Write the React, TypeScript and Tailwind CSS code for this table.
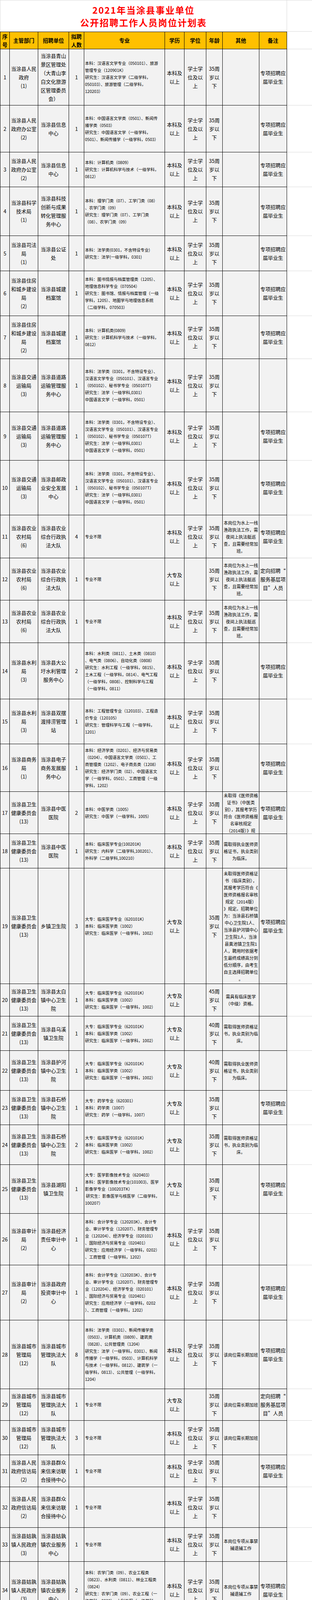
const F = "font-['Noto_Sans_CJK_SC','Noto_Sans',sans-serif]";

// dept, unit, count, major, edu, degree, age, other, note, row height
type Row = [string, string, string, string, string, string, string, string, string, number];

const BK = "本科及|以上";
const DZ = "大专及|以上";
const XS = "学士学|位及以|上";
const A35 = "35周|岁以|下";
const ZX = "专项招聘应|届毕业生";
const DX = "定向招聘“|服务基层项|目”人员";
const BX = "专业不限";
const YZ = "本岗位为水上一线|渔政执法工作，需|夜间上执法艇巡|查，且需要经常加|班。";
const JB = "本岗位专项从事禁|捕退捕工作";
const JB2 = "本岗位专项从事禁|捕退捕工作，需夜|间值班且经常加班";
const CG = "该岗位需长期加班";
const LC = "大专：临床医学专业（620101K）|本科：临床医学类（1002）|研究生：临床医学（一级学科，1002）";
const JT =
  "本科：法学类（0301，不含特设专业）、|汉语言文学专业（050101）、汉语言专业|（050102）、秘书学专业（050107T）|研究生：法学（一级学科,0301）|中国语言文学（一级学科，0501）";
const SJ =
  "本科：会计学专业（120203K）、会计专|业、审计学专业（120207）、财务管理专|业（120204）、经济学专业（020101）|、国际经济与贸易专业（020401）";
const LX = "本科：理学门类（07）、工学门类（08）|、农学门类（09）|研究生：理学门类（07）、工学门类|（08）、农学门类（09）";

const bgs = "当涂县人民|政府办公室|(2)";
const zf = "当涂县住房|和城乡建设|局|(2)";
const jt = "当涂县交通|运输局|(3)";
const ny = "当涂县农业|农村局|(6)";
const sl = "当涂县水利|局|(3)";
const ws = "当涂县卫生|健康委员会|(13)";
const sj = "当涂县审计|局|(2)";
const cg = "当涂县城市|管理局|(12)";
const xf = "当涂县人民|政府信访局|(2)";
const gs = "当涂县姑孰|镇人民政府|(3)";
const tb = "当涂县太白|镇人民政府|(3)";
const hc = "当涂县黄池|镇人民政府|(3)";
const sq = "当涂县石桥|镇人民政府|(3)";
const tn = "当涂县塘南|镇人民政府|(3)";
const dl = "当涂县大陇|镇人民政府|(3)";
const hy = "当涂县湖阳|镇人民政府|(4)";
const jx = "当涂县江心|乡人民政府|(3)";

const rows: Row[] = [
  ["当涂县人民|政府|(1)", "当涂县青山|景区管理处|（大青山李|白文化旅游|区管理委员|会）", "1", "本科：汉语言文学专业（050101）、旅游|管理专业（120901K）|研究生：汉语言文字学（二级学科，|050103）、旅游管理（二级学科，|120203）", BK, XS, A35, "", ZX, 144],
  [bgs, "当涂县信息|中心", "1", "本科：中国语言文学类（0501）、新闻传|播学类（0503）|研究生：中国语言文学（一级学科，|0501）、新闻传播学（一级学科，0503）", BK, XS, A35, "", ZX, 120],
  [bgs, "当涂县信息|中心", "1", "本科：计算机类（0809）|研究生：计算机科学与技术（一级学科，|0812）", BK, XS, A35, "", ZX, 89],
  ["当涂县科学|技术局|(1)", "当涂县科技|创新与成果|转化管理服|务中心", "1", LX, BK, XS, A35, "", ZX, 125],
  ["当涂县司法|局|(1)", "当涂县公证|处", "1", "本科：法学类(0301，不含特设专业)|研究生：法学(一级学科，0301)", BK, XS, A35, "", ZX, 90],
  [zf, "当涂县城建|档案馆", "1", "本科：图书情报与档案管理类（1205）、|地理信息科学专业（070504）|研究生：图书馆、情报与档案管理（一级|学科，1205）、地图学与地理信息系统|（二级学科，070503）", BK, XS, A35, "", ZX, 115],
  [zf, "当涂县城建|档案馆", "1", "本科：计算机类(0809)|研究生：计算机科学与技术（一级学科，|0812）", BK, XS, A35, "", ZX, 110],
  [jt, "当涂县道路|运输管理服|务中心", "1", JT, BK, XS, A35, "", "", 136],
  [jt, "当涂县道路|运输管理服|务中心", "1", JT, BK, XS, A35, "", ZX, 124],
  [jt, "当涂县邮政|业安全发展|中心", "1", JT, BK, XS, A35, "", ZX, 140],
  [ny, "当涂县农业|综合行政执|法大队", "4", BX, BK, XS, A35, YZ, ZX, 110],
  [ny, "当涂县农业|综合行政执|法大队", "1", BX, DZ, "", A35, YZ, DX, 108],
  [ny, "当涂县农业|综合行政执|法大队", "1", BX, BK, XS, A35, YZ, "", 109],
  [sl, "当涂县大公|圩水利管理|服务中心", "2", "本科：水利类（0811）、土木类（0810）|、电气类（0806）、自动化类（0808）|研究生：水利工程（一级学科，0815）、|土木工程（一级学科，0814）、电气工程|（一级学科，0808）、控制科学与工程|（一级学科，0811）", BK, XS, A35, "", ZX, 144],
  [sl, "当涂县双摆|渡排涝管理|站", "1", "本科：工程管理专业（120103）、工程造|价专业（120105）|研究生：管理科学与工程（一级学科，|1201）", BK, XS, A35, "", "", 115],
  ["当涂县商务|局|(1)", "当涂县电子|商务发展服|务中心", "1", "本科：经济学类（0201）、经济与贸易类|（0204）、中国语言文学类（0501）、工|商管理类（1202）、电子商务类（1208）|研究生：经济学门类（02）、中国语言文|学（一级学科，0501）、工商管理（一级|学科，1202）", BK, XS, A35, "", ZX, 122],
  [ws, "当涂县中医|医院", "2", "本科：中医学类（1005）|研究生：中医学（一级学科，1005）", BK, XS, A35, "未取得《医师资格|证书》（中医类|别），其报考学历|符合《医师资格报|名审核规定|（2014版）》规", ZX, 108],
  [ws, "当涂县中医|医院", "1", "本科：临床医学专业(100201K)|研究生：内科学（二级学科,100201）、|外科学（二级学科,100210）", BK, XS, A35, "需取得执业医师资|格证书，执业类别|为临床。", "", 88],
  [ws, "乡镇卫生院", "3", LC, DZ, "", A35, "未取得医师资格证|书（临床类别），|其报考学历符合《|医师资格报名审核|规定（2014版）|》规定。招聘单位|为：当涂县石桥镇|中心卫生院1人、|当涂县护河镇中心|卫生院1人，当涂|县黄池镇卫生院1|人，聘用时依据考|生最终成绩高分到|低分顺序，由考生|自主选择招聘单位|。", ZX, 296],
  [ws, "当涂县太白|镇中心卫生|院", "1", LC, DZ, "", "45周|岁以|下", "需具有临床医学|（中级）资格。", "", 83],
  [ws, "当涂县乌溪|镇卫生院", "1", LC, DZ, "", "40周|岁以|下", "需取得医师资格证|书，执业类别为临|床。", "", 88],
  [ws, "当涂县护河|镇中心卫生|院", "1", LC, DZ, "", "40周|岁以|下", "需取得执业医师资|格证书，执业类别|为临床。", "", 102],
  [ws, "当涂县石桥|镇中心卫生|院", "1", "大专：药学专业（620301）|本科：药学类（1007）|研究生：药学（一级学科，1007）", DZ, "", A35, "", ZX, 88],
  [ws, "当涂县石桥|镇中心卫生|院", "2", LC, DZ, "", A35, "需取得医师资格证|书，执业类别为临|床。", "", 102],
  [ws, "当涂县湖阳|镇卫生院", "1", "大专：医学影像技术专业（620403）|本科：医学影像技术专业(101003)、医学|影像学专业（100203TK）| 研究生：影像医学与核医学（二级学科，|100207）", DZ, "", A35, "", ZX, 125],
  [sj, "当涂县经济|责任审计中|心", "1", SJ + "|研究生：应用经济学（一级学科，0202）|、工商管理（一级学科，1202）", BK, XS, A35, "", "", 132],
  [sj, "当涂县政府|投资审计中|心", "1", SJ + "|研究生：应用经济学（一级学科，0202|）、工商管理（一级学科，1202）", BK, XS, A35, "", ZX, 141],
  [cg, "当涂县城市|管理执法大|队", "8", "本科：法学类（0301）、新闻传播学类|（0503）、计算机类（0809）、建筑类|（0828）、公共管理类（1204）|研究生：法学（一级学科，0301）、新闻|传播学（一级学科，0503）、计算机科学|与技术（一级学科，0812）、建筑学（一|级学科，0813）、公共管理（一级学科，|1204）", BK, XS, A35, CG, ZX, 176],
  [cg, "当涂县城市|管理执法大|队", "1", BX, DZ, "", A35, CG, DX, 81],
  [cg, "当涂县城市|管理执法大|队", "3", BX, BK, XS, A35, CG, "", 88],
  [xf, "当涂县群众|来信来访联|合接待中心", "1", BX, BK, XS, A35, "", ZX, 82],
  [xf, "当涂县群众|来信来访联|合接待中心", "1", BX, BK, XS, A35, "", "", 104],
  [gs, "当涂县姑孰|镇农业服务|中心", "1", BX, BK, XS, A35, JB, "", 87],
  [gs, "当涂县姑孰|镇农业服务|中心", "2", "本科：农学门类（09）、农业工程类|（0823）、水利类（0811）、林业工程类|（0824）|研究生：农学门类（09）、农业工程（一|级学科，0828）、水利工程（一级学科，|0815）、林业工程（一级学科，0829）", BK, XS, A35, JB, ZX, 146],
  [tb, "当涂县太白|镇农业服务|中心", "1", "本科：法学门类(03)|研究生：法学门类(03)", BK, XS, A35, JB2, "", 78],
  [tb, "当涂县太白|镇农业服务|中心", "2", "本科：工学门类(08)、农学门类(09)|研究生：工学门类(08)、农学门类(09)", BK, XS, A35, JB2, ZX, 104],
  [hc, "当涂县黄池|镇社会事务|服务中心", "1", "本科：公共管理类（1204）|研究生：公共管理（一级学科，1204）", BK, XS, A35, "", "", 91],
  [hc, "当涂县黄池|镇农业服务|中心", "1", "本科：文学门类（05）、管理学门类|（12）、经济学门类（02）|研究生：文学门类(05)、管理学门类|（12）、经济学门类（02）", BK, XS, A35, "", ZX, 122],
  [hc, "当涂县黄池|镇农业服务|中心", "1", LX, BK, XS, A35, "", ZX, 117],
  [sq, "当涂县石桥|镇农业服务|中心", "2", BX, BK, XS, A35, "", ZX, 90],
  [sq, "当涂县石桥|镇社会事务|服务中心", "1", BX, BK, XS, A35, "", "", 85],
  ["当涂县乌溪|镇人民政府|(2)", "当涂县乌溪|镇农业服务|中心", "2", "本科：农学门类（09）、水利类（0811）|、农业工程类（0823）|研究生：农学门类（09）、水利工程（一|级学科、0815）、农业工程（一级学科、|0828）", BK, XS, A35, "", ZX, 139],
  [tn, "当涂县塘南|镇农业服务|中心", "2", "本科：经济学门类（02）、会计学专业|（120203K）、会计专业|研究生：经济学门类（02）、会计学（二|级学科，120201）、会计专业硕士|（1253）", BK, XS, A35, "", ZX, 147],
  [tn, "当涂县塘南|镇社会事务|服务中心", "1", "本科：法学门类（03）|研究生：法学门类（03）", BK, XS, A35, "", "", 89],
  [dl, "当涂县大陇|镇农业服务|中心", "1", "本科：会计学专业（120203K）、会计专|业、财务管理专业（120204）、审计学专|业（120207）、农林经济管理专业|（120301）|研究生：会计学（二级学科，120201）|、企业管理（二级学科，120202）、农林|经济管理（一级学科，1203）", BK, XS, A35, "", ZX, 199],
  [dl, "当涂县大陇|镇农业服务|中心", "1", "本科：中国语言文学类（0501）|研究生：中国语言文学（一级学科，|0501）", BK, XS, A35, "", ZX, 90],
  [dl, "当涂县大陇|镇经济发展|服务中心", "1", "本科：土木类（0810）、水利类（0811）|、建筑类（0828）、农业工程类（0823）|、林业工程类（0824）、机械设计制造及|其自动化专业（080202）|研究生：土木工程（一级学科，0814）、|水利工程（一级学科，0815）、建筑学|（一级学科，0813）、农业工程（一级学|科，0828）、林业工程（一级学科，|0829）、机械工程（一级学科，0802）", BK, XS, A35, "", "", 269],
  [hy, "当涂县湖阳|镇农业服务|中心", "2", BX, BK, XS, A35, JB, ZX, 96],
  [hy, "当涂县湖阳|镇农业服务|中心", "1", "本科：管理学门类（12）|研究生：管理学门类（12）", BK, XS, A35, JB, ZX, 109],
  [hy, "当涂县湖阳|镇社会事务|服务中心", "1", BX, BK, XS, A35, "", "", 86],
  [jx, "当涂县江心|乡农业服务|中心", "2", BX, BK, XS, A35, JB, ZX, 98],
  [jx, "当涂县江心|乡农业服务|中心", "1", BX, BK, XS, A35, JB, "", 72],
  ["当涂县护河|镇人民政府|(1)", "当涂县护河|镇社会事务|服务中心", "1", BX, BK, XS, A35, "", ZX, 87],
];

function Lines({ text }: { text: string }) {
  if (!text) return null;
  return (
    <div>
      {text.split("|").map((t, i) => (
        <div key={i} className="h-[1lh] whitespace-pre">
          {t}
        </div>
      ))}
    </div>
  );
}

const cell = "flex min-h-0 items-center overflow-hidden border-r border-b border-black bg-[#f2f2f2]";
const big = `${cell} justify-center text-center text-[13px] leading-[22px]`;
const filler = "min-h-0 border-b border-[#d9d9d9] bg-white";
const head =
  "flex min-h-0 items-center justify-center overflow-hidden border-t border-r border-b border-black bg-[#ffc000] text-center text-[13.5px] font-bold leading-[21px]";

// track sizes come from the data, so they are passed as a computed style
const rowTracks = ["81px", "45px", ...rows.map((r) => `${r[9]}px`)].join(" ");

export default function App() {
  return (
    <div
      className={`grid h-[6312px] w-[800px] grid-cols-[25px_73px_79px_39px_207px_50px_56px_42px_94px_71px_64px] overflow-hidden bg-white text-black ${F}`}
      style={{ gridTemplateRows: rowTracks }}
    >
      {/* Title */}
      <div className="col-span-10 flex min-h-0 flex-col items-center justify-center overflow-hidden border-t border-l border-r border-[#d9d9d9] text-[23px] font-bold leading-[32px] tracking-[2px] text-[#ff0000]">
        <div>2021年当涂县事业单位</div>
        <div>公开招聘工作人员岗位计划表</div>
      </div>
      <div className="min-h-0 border-t border-b border-[#d9d9d9]" />

      {/* Header */}
      <div className={`${head} border-l`}>
        <div>
          序<br />号
        </div>
      </div>
      <div className={head}>主管部门</div>
      <div className={head}>招聘单位</div>
      <div className={head}>
        <div>
          拟聘<br />人数
        </div>
      </div>
      <div className={head}>专业</div>
      <div className={head}>学历</div>
      <div className={head}>学位</div>
      <div className={head}>年龄</div>
      <div className={head}>其他</div>
      <div className={head}>备注</div>
      <div className={filler} />

      {rows.map((r, i) => {
        const [dept, unit, n, major, edu, deg, age, other, note] = r;
        return [
          <div key={`a${i}`} className={`${big} border-l`}>
            {i + 1}
          </div>,
          <div key={`b${i}`} className={big}>
            <Lines text={dept} />
          </div>,
          <div key={`c${i}`} className={big}>
            <Lines text={unit} />
          </div>,
          <div key={`d${i}`} className={big}>
            {n}
          </div>,
          <div key={`e${i}`} className={`${cell} justify-start pl-[2px] text-[10.5px] leading-[18px]`}>
            <Lines text={major} />
          </div>,
          <div key={`f${i}`} className={big}>
            <Lines text={edu} />
          </div>,
          <div key={`g${i}`} className={big}>
            <Lines text={deg} />
          </div>,
          <div key={`h${i}`} className={big}>
            <Lines text={age} />
          </div>,
          <div key={`j${i}`} className={`${cell} justify-center text-center text-[11px] leading-[18px]`}>
            <Lines text={other} />
          </div>,
          <div key={`k${i}`} className={big}>
            <Lines text={note} />
          </div>,
          <div key={`l${i}`} className={filler} />,
        ];
      })}
    </div>
  );
}
